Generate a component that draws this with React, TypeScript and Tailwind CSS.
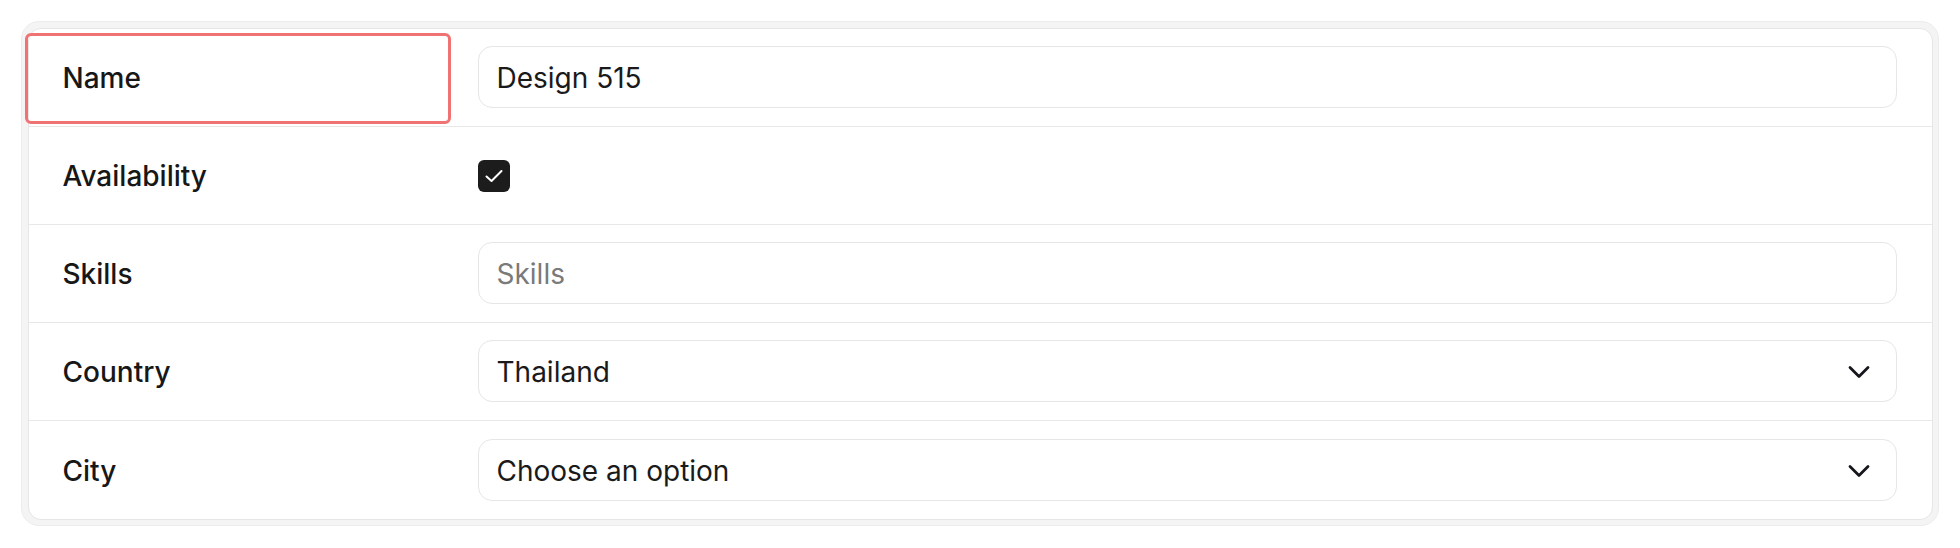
import React from "react";

const Chevron = () => (
  <svg width="22" height="14" viewBox="0 0 22 14" fill="none" className="h-[14px] w-[22px] shrink-0">
    <path d="M2 2.5L11 11.5L20 2.5" stroke="#16161d" strokeWidth="2.8" strokeLinecap="round" strokeLinejoin="round" />
  </svg>
);

const inputBox =
  "flex h-[62px] flex-1 items-center rounded-[14px] border-[1.5px] border-[#e6e6e6] bg-white px-[18px] pt-[2px] text-[28px]";

function Row({ label, children, first, last }: { label: string; children: React.ReactNode; first?: boolean; last?: boolean }) {
  return (
    <div className={`flex h-[98px] items-center ${last ? "" : "border-b-[1.5px] border-[#e8e8e8]"}`}>
      <div className="relative flex h-full w-[422px] shrink-0 items-center pl-[34px] pt-[2px] text-[28px] font-medium text-[#171717]">
        {first && (
          <div className="pointer-events-none absolute -left-[4px] top-[4px] bottom-[2px] right-0 rounded-[6px] border-[3.5px] border-[#f07272]" />
        )}
        {label}
      </div>
      <div className="flex flex-1 items-center pl-[27px] pr-[35px]">{children}</div>
    </div>
  );
}

export default function App() {
  return (
    <div className="min-h-[548px] bg-white p-[21px]" style={{ fontFamily: "Inter, 'Noto Sans', sans-serif" }}>
      <div className="rounded-[18px] border-[1.5px] border-[#ececec] bg-[#f4f4f4] p-[5.5px]">
        <div className="rounded-[13px] border-[1.5px] border-[#e6e6e6] bg-white">
          <Row label="Name" first>
            <div className={`${inputBox} text-[#1a1a1a]`}>Design 515</div>
          </Row>
          <Row label="Availability">
            <div className="mt-[2px] flex h-[32px] w-[32px] shrink-0 items-center justify-center rounded-[6px] bg-[#1c1c1c]">
              <svg viewBox="0 0 24 24" fill="none" className="h-[24px] w-[24px]">
                <path d="M4.5 12.5L9.5 17L19.5 7" stroke="white" strokeWidth="2" strokeLinecap="round" strokeLinejoin="round" />
              </svg>
            </div>
          </Row>
          <Row label="Skills">
            <div className={`${inputBox} text-[#7a7a7a]`}>Skills</div>
          </Row>
          <Row label="Country">
            <div className={`${inputBox} justify-between pr-[26px] text-[#1a1a1a]`}>
              <span>Thailand</span>
              <Chevron />
            </div>
          </Row>
          <Row label="City" last>
            <div className={`${inputBox} justify-between pr-[26px] text-[#1a1a1a]`}>
              <span>Choose an option</span>
              <Chevron />
            </div>
          </Row>
        </div>
      </div>
    </div>
  );
}
